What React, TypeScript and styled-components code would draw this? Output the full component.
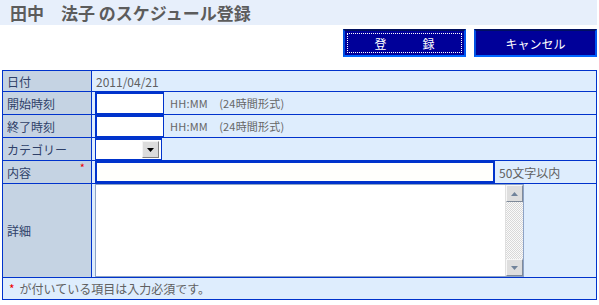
import React from 'react';
import styled, { createGlobalStyle } from 'styled-components';

const GlobalStyle = createGlobalStyle`
  html, body {
    margin: 0;
    padding: 0;
    background: #ffffff;
    font-family: "Noto Sans CJK JP", "Liberation Sans", sans-serif;
  }
`;

const Page = styled.div`
  width: 599px;
  height: 305px;
  overflow: hidden;
`;

const TitleBar = styled.div`
  width: 597px;
  height: 25px;
  background: #e7effb;
  display: flex;
  align-items: center;
  padding-left: 10px;
  box-sizing: border-box;
`;

const Title = styled.h1`
  margin: 0;
  font-size: 17px;
  font-weight: 700;
  color: #5c5c5c;
  white-space: pre;
`;

const ButtonBar = styled.div`
  width: 597px;
  display: flex;
  justify-content: flex-end;
  gap: 8px;
  margin-top: 4px;
`;

const ActionButton = styled.button<{ focused?: boolean }>`
  width: 123px;
  height: 28px;
  background: #000099;
  color: #ffffff;
  font-family: inherit;
  font-size: 12px;
  border: 2px solid;
  border-color: #001060 #0058f0 #0066ff #0050e0;
  padding: 0;
  outline: ${({ focused }) => (focused ? '1px dotted #ffffff' : 'none')};
  outline-offset: -5px;
  white-space: pre;
`;

const FormTable = styled.table`
  margin: 13px 0 0 2px;
  width: 595px;
  border-collapse: collapse;
  border: 1px solid #2244dd;
  font-size: 12px;
`;

const Row = styled.tr<{ h: number }>`
  height: ${({ h }) => h}px;
`;

const LabelCell = styled.th`
  width: 89px;
  background: #c5d3e3;
  color: #2e4068;
  font-weight: 400;
  text-align: left;
  padding: 0 0 0 4px;
  border: 1px solid #0033cc;
  position: relative;
  box-sizing: border-box;
`;

const Required = styled.span`
  position: absolute;
  top: 1px;
  right: 6px;
  color: #ee0000;
  font-size: 11px;
  line-height: 11px;
`;

const ValueCell = styled.td<{ pad?: number }>`
  background: #deedfd;
  color: #606060;
  padding: 0 0 0 ${({ pad }) => pad ?? 3}px;
  border: 1px solid #0033cc;
  box-sizing: border-box;
`;

const InlineRow = styled.div`
  display: flex;
  align-items: center;
  gap: 6px;
`;

const TimeInput = styled.input`
  width: 69px;
  height: 22px;
  box-sizing: border-box;
  border-style: solid;
  border-color: #0033cc;
  border-width: 2px 1px 1px 2px;
  background: #ffffff;
  margin: 0;
`;

const Hint = styled.span`
  color: #666666;
  font-size: 11px;
  letter-spacing: 0.2px;
`;

const SelectBox = styled.div`
  width: 67px;
  height: 22px;
  box-sizing: border-box;
  border: 1px solid #0033cc;
  border-top-width: 2px;
  background: #ffffff;
  display: flex;
  justify-content: flex-end;
  align-items: center;
  padding-right: 2px;
`;

const SelectArrow = styled.div`
  width: 17px;
  height: 17px;
  box-sizing: border-box;
  background: #dcdcdc;
  border: 1px solid;
  border-color: #f4f4f4 #808080 #808080 #f4f4f4;
  display: flex;
  align-items: center;
  justify-content: center;
`;

const TextInput = styled.input`
  width: 399px;
  height: 22px;
  box-sizing: border-box;
  border-style: solid;
  border-color: #0033cc;
  border-width: 2px 1px 2px 2px;
  background: #fffffc;
  margin: 0;
  display: block;
`;

const NoteCell = styled(ValueCell)`
  width: 102px;
  padding-left: 4px;
`;

const DetailBox = styled.div`
  width: 429px;
  height: 93px;
  box-sizing: border-box;
  border: 1px solid #8da3c6;
  background: #ffffff;
  display: flex;
`;

const DetailText = styled.textarea`
  flex: 1;
  border: none;
  resize: none;
  outline: none;
  margin: 0;
  padding: 2px;
  overflow: hidden;
`;

const ScrollBar = styled.div`
  width: 17px;
  display: flex;
  flex-direction: column;
  background-color: #f0f0f0;
  background-image: repeating-conic-gradient(#d8d8d8 0 25%, #fafafa 0 50%);
  background-size: 2px 2px;
  border-left: 1px solid #e0e0e0;
`;

const ScrollButton = styled.div`
  height: 17px;
  box-sizing: border-box;
  background: #dedede;
  border: 1px solid;
  border-color: #f6f6f6 #7f8a99 #7f8a99 #f6f6f6;
  display: flex;
  align-items: center;
  justify-content: center;
`;

const ScrollTrack = styled.div`
  flex: 1;
`;

const FooterCell = styled.td`
  background: #deedfd;
  color: #606060;
  padding: 0 0 0 6px;
  border: 1px solid #0033cc;
`;

const Mark = styled.span`
  color: #ee0000;
  margin-right: 5px;
`;

const Triangle: React.FC<{ up?: boolean; color: string }> = ({ up, color }) => (
  <svg width="7" height="4" viewBox="0 0 7 4">
    <path d={up ? 'M0 4 L3.5 0 L7 4 Z' : 'M0 0 L7 0 L3.5 4 Z'} fill={color} />
  </svg>
);

const TIME_FIELDS = ['開始時刻', '終了時刻'];

export default function App() {
  return (
    <Page>
      <GlobalStyle />
      <TitleBar>
        <Title>田中　法子 のスケジュール登録</Title>
      </TitleBar>
      <ButtonBar>
        <ActionButton focused>{'登　　　録'}</ActionButton>
        <ActionButton>キャンセル</ActionButton>
      </ButtonBar>
      <FormTable>
        <tbody>
          <Row h={21}>
            <LabelCell>日付</LabelCell>
            <ValueCell colSpan={2} pad={4}>
              2011/04/21
            </ValueCell>
          </Row>
          {TIME_FIELDS.map((label) => (
            <Row h={23} key={label}>
              <LabelCell>{label}</LabelCell>
              <ValueCell colSpan={2}>
                <InlineRow>
                  <TimeInput />
                  <Hint>HH:MM　(24時間形式)</Hint>
                </InlineRow>
              </ValueCell>
            </Row>
          ))}
          <Row h={23}>
            <LabelCell>カテゴリー</LabelCell>
            <ValueCell colSpan={2}>
              <SelectBox>
                <SelectArrow>
                  <Triangle color="#000000" />
                </SelectArrow>
              </SelectBox>
            </ValueCell>
          </Row>
          <Row h={23}>
            <LabelCell>
              内容
              <Required>*</Required>
            </LabelCell>
            <ValueCell>
              <TextInput />
            </ValueCell>
            <NoteCell>50文字以内</NoteCell>
          </Row>
          <Row h={94}>
            <LabelCell>詳細</LabelCell>
            <ValueCell colSpan={2}>
              <DetailBox>
                <DetailText />
                <ScrollBar>
                  <ScrollButton>
                    <Triangle up color="#71839a" />
                  </ScrollButton>
                  <ScrollTrack />
                  <ScrollButton>
                    <Triangle color="#71839a" />
                  </ScrollButton>
                </ScrollBar>
              </DetailBox>
            </ValueCell>
          </Row>
          <Row h={22}>
            <FooterCell colSpan={3}>
              <Mark>*</Mark>が付いている項目は入力必須です。
            </FooterCell>
          </Row>
        </tbody>
      </FormTable>
    </Page>
  );
}
